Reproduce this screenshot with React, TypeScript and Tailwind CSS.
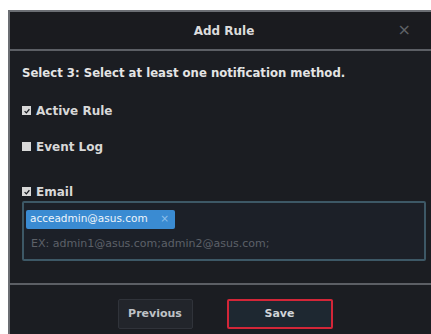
import React from 'react';

export default function App() {
  return (
    <div className="h-[334px] w-[431px] overflow-hidden bg-white pl-2 pt-[10px] font-['DejaVu_Sans',Verdana,sans-serif]">
      <div className="flex h-[340px] w-[430px] flex-col border-l-2 border-t-2 border-[#6b6e73] bg-[#1b1d22]">
        {/* header */}
        <div className="relative flex h-[39px] items-center justify-center border-b-2 border-[#5c5f65] bg-[#1a1b1f]">
          <span className="text-[12px] font-bold text-[#dcdcdc]">Add Rule</span>
          <span className="absolute right-[27px] top-[10px] text-[16px] leading-none text-[#5f6267]">×</span>
        </div>

        {/* body */}
        <div className="flex h-[232px] flex-col px-3 pt-[14px]">
          <div className="text-[11.7px] font-bold text-[#e4e4e4]">Select 3: Select at least one notification method.</div>

          <label className="mt-[19px] flex items-center gap-[5px] text-[12px] font-bold text-[#d8d8d8]">
            <span className="flex h-[9px] w-[9px] items-center justify-center bg-[#d8d8d8]">
              <svg viewBox="0 0 10 10" className="h-[8px] w-[8px]">
                <path d="M2 5.2 L4.2 7.3 L8 2.8" stroke="#1b1d22" strokeWidth="1.6" fill="none" />
              </svg>
            </span>
            Active Rule
          </label>

          <label className="mt-[18px] flex items-center gap-[5px] text-[12px] font-bold text-[#d8d8d8]">
            <span className="h-[9px] w-[9px] bg-[#d8d8d8]" />
            Event Log
          </label>

          <label className="mt-[27px] flex items-center gap-[5px] text-[12px] font-bold text-[#d8d8d8]">
            <span className="flex h-[9px] w-[9px] items-center justify-center bg-[#d8d8d8]">
              <svg viewBox="0 0 10 10" className="h-[8px] w-[8px]">
                <path d="M2 5.2 L4.2 7.3 L8 2.8" stroke="#1b1d22" strokeWidth="1.6" fill="none" />
              </svg>
            </span>
            Email
          </label>

          <div className="mt-0 flex h-[60px] w-[404px] flex-col rounded-[2px] border-2 border-[#3d5866] bg-[#1c2028] px-[2px] pt-[7px]">
            <div className="flex h-[19px] w-[149px] items-center justify-between rounded-[2px] bg-[#3a8bd2] pl-[4px] pr-[6px] text-[10.5px] text-[#eef5fb]">
              <span>acceadmin@asus.com</span>
              <span className="text-[#8fc0ea]">×</span>
            </div>
            <div className="mt-[7px] pl-[5px] text-[11px] text-[#5d6168]">EX: admin1@asus.com;admin2@asus.com;</div>
          </div>
        </div>

        {/* footer */}
        <div className="flex flex-1 items-start justify-center gap-[34px] border-t-2 border-[#5c5f65] pl-[2px] pt-[14px]">
          <button className="h-[30px] w-[75px] rounded-[2px] border border-[#30333a] bg-[#22252b] text-[11px] font-bold text-[#bfc2c6]">
            Previous
          </button>
          <button className="h-[30px] w-[106px] rounded-[2px] border-2 border-[#d32638] bg-[#1e2831] text-[11px] font-bold text-[#d0d4d8]">
            Save
          </button>
        </div>
      </div>
    </div>
  );
}
